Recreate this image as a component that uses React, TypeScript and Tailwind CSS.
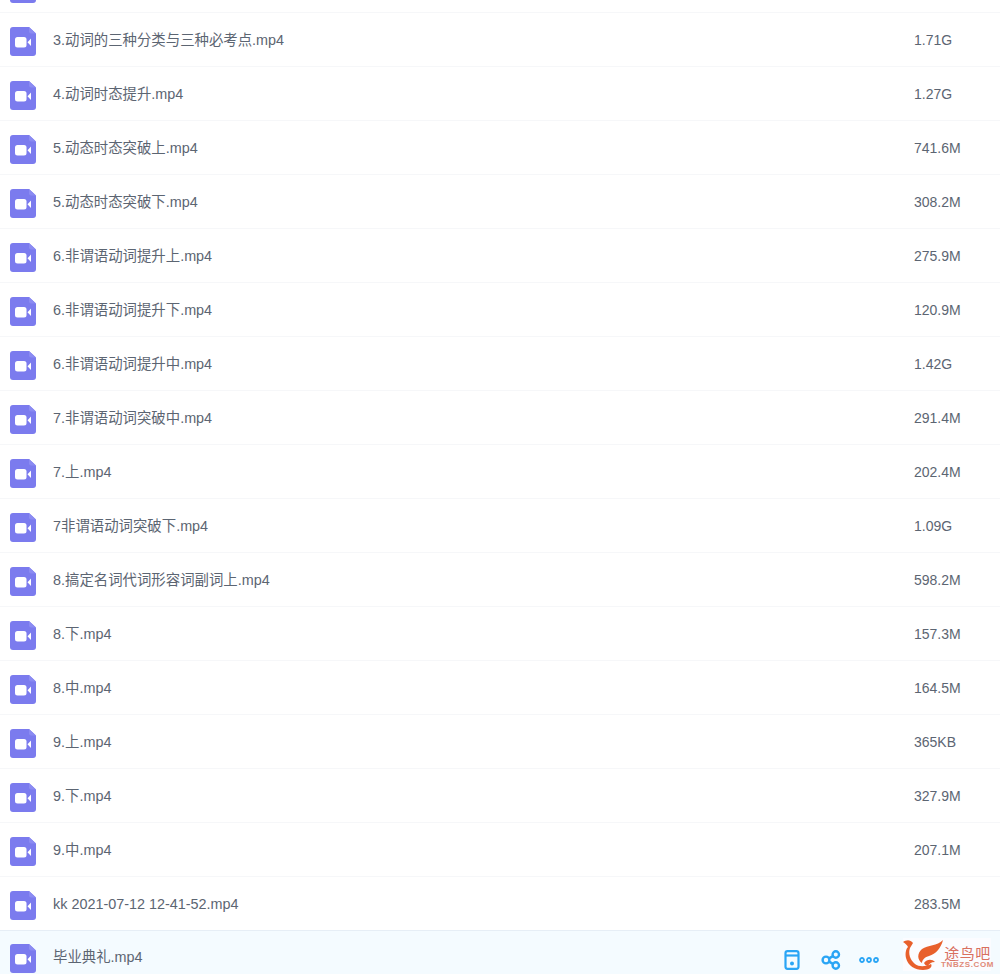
const files: [string, string][] = [
  ["3.动词的三种分类与三种必考点.mp4", "1.71G"],
  ["4.动词时态提升.mp4", "1.27G"],
  ["5.动态时态突破上.mp4", "741.6M"],
  ["5.动态时态突破下.mp4", "308.2M"],
  ["6.非谓语动词提升上.mp4", "275.9M"],
  ["6.非谓语动词提升下.mp4", "120.9M"],
  ["6.非谓语动词提升中.mp4", "1.42G"],
  ["7.非谓语动词突破中.mp4", "291.4M"],
  ["7.上.mp4", "202.4M"],
  ["7非谓语动词突破下.mp4", "1.09G"],
  ["8.搞定名词代词形容词副词上.mp4", "598.2M"],
  ["8.下.mp4", "157.3M"],
  ["8.中.mp4", "164.5M"],
  ["9.上.mp4", "365KB"],
  ["9.下.mp4", "327.9M"],
  ["9.中.mp4", "207.1M"],
  ["kk 2021-07-12 12-41-52.mp4", "283.5M"],
];

function VideoIcon() {
  return (
    <svg width="26" height="29" viewBox="0 0 26 29" className="shrink-0">
      <path d="M3 0H19L26 6.5V26a3 3 0 0 1-3 3H3a3 3 0 0 1-3-3V3a3 3 0 0 1 3-3Z" fill="#7b7bee" />
      <path d="M19 0L26 6.5H21a2 2 0 0 1-2-2Z" fill="#8b8bf2" />
      <rect x="5" y="10" width="11.5" height="10.5" rx="2.5" fill="#ffffff" />
      <path d="M17.5 15.2L21 11.5V19Z" fill="#ffffff" />
    </svg>
  );
}

function Row({ name, size }: { name: string; size: string }) {
  return (
    <div className="flex h-[54px] items-start border-b border-[#f6f7f9] pl-[10px] pt-[14px]">
      <VideoIcon />
      <div className="ml-[17px] mt-[2px] w-[861px] text-[14.4px] leading-[22px] text-[#5c6572]">{name}</div>
      <div className="mt-[2px] text-[14px] leading-[22px] text-[#5c6572]">{size}</div>
    </div>
  );
}

export default function App() {
  return (
    <div className="h-[974px] w-[1000px] overflow-hidden bg-white font-['Liberation_Sans','Noto_Sans_CJK_SC',sans-serif]">
      <div className="flex h-[13px] items-end overflow-hidden border-b border-[#f6f7f9] pb-[9px] pl-[10px]">
        <div className="shrink-0"><VideoIcon /></div>
      </div>
      {files.map(([n, s]) => (
        <Row key={n} name={n} size={s} />
      ))}
      <div className="-mt-px flex h-[44px] items-start border-t border-[#e6eef6] bg-[#f4fbff] pl-[10px] pt-[13px]">
        <VideoIcon />
        <div className="ml-[17px] mt-[2px] w-[731px] text-[14.4px] leading-[22px] text-[#5c6572]">毕业典礼.mp4</div>
        <div className="mt-[6px] flex items-start">
          <svg width="16" height="20" viewBox="0 0 16 20" fill="none" stroke="#2aa5f5" strokeWidth="2.2">
            <rect x="1.5" y="1.2" width="13" height="17.6" rx="2" />
            <path d="M1.5 5.5h13" />
            <circle cx="8" cy="13.5" r="0.9" fill="#2aa5f5" />
          </svg>
          <svg width="20" height="20" viewBox="0 0 20 20" fill="none" stroke="#2aa5f5" strokeWidth="2.4" className="ml-[21px]">
            <circle cx="5" cy="10" r="3.4" />
            <circle cx="14.8" cy="4.5" r="3.2" />
            <circle cx="14.8" cy="15.5" r="3.2" />
            <path d="M8 8.4l4-2.3M8 11.6l4 2.3" />
          </svg>
          <svg width="20" height="8" viewBox="0 0 20 8" fill="none" stroke="#2aa5f5" strokeWidth="1.8" className="ml-[18px] mt-[6px]">
            <circle cx="3" cy="4" r="2" />
            <circle cx="10" cy="4" r="2" />
            <circle cx="17" cy="4" r="2" />
          </svg>
        </div>
        <div className="ml-[24px] -mt-[6px] flex items-start bg-[#fbfcff]">
          <svg width="41" height="33" viewBox="0 0 41 33" className="shrink-0">
            <path d="M0 4C3 2 7 1 10 5C9 7 8 8 7 10C5 15 7 22 12 26C16 29 22 29 28 26C30 29 26 32 20 32C12 32 5 28 3 20C2 15 3 11 5 9C4 7 2 5 0 4Z" fill="#e8602c" />
            <path d="M40 2C38 10 33 16 26 18C22 19 19 22 19 25C14 22 14 15 19 11C25 7 34 8 40 2Z" fill="#e8602c" />
            <path d="M21 25C24 21 29 21 32 24C28 24 26 26 25 28C23 28 22 27 21 25Z" fill="#e8602c" />
          </svg>
          <div className="mt-[8px] flex w-[47px] flex-col items-center leading-none">
            <div className="whitespace-nowrap text-[15px] leading-[15px] tracking-[0.5px] text-[#d9705f]">途鸟吧</div>
            <div className="whitespace-nowrap text-[8px] font-bold leading-[8px] tracking-[0.6px] text-[#e08a78]">TNBZS.COM</div>
          </div>
        </div>
      </div>
    </div>
  );
}
